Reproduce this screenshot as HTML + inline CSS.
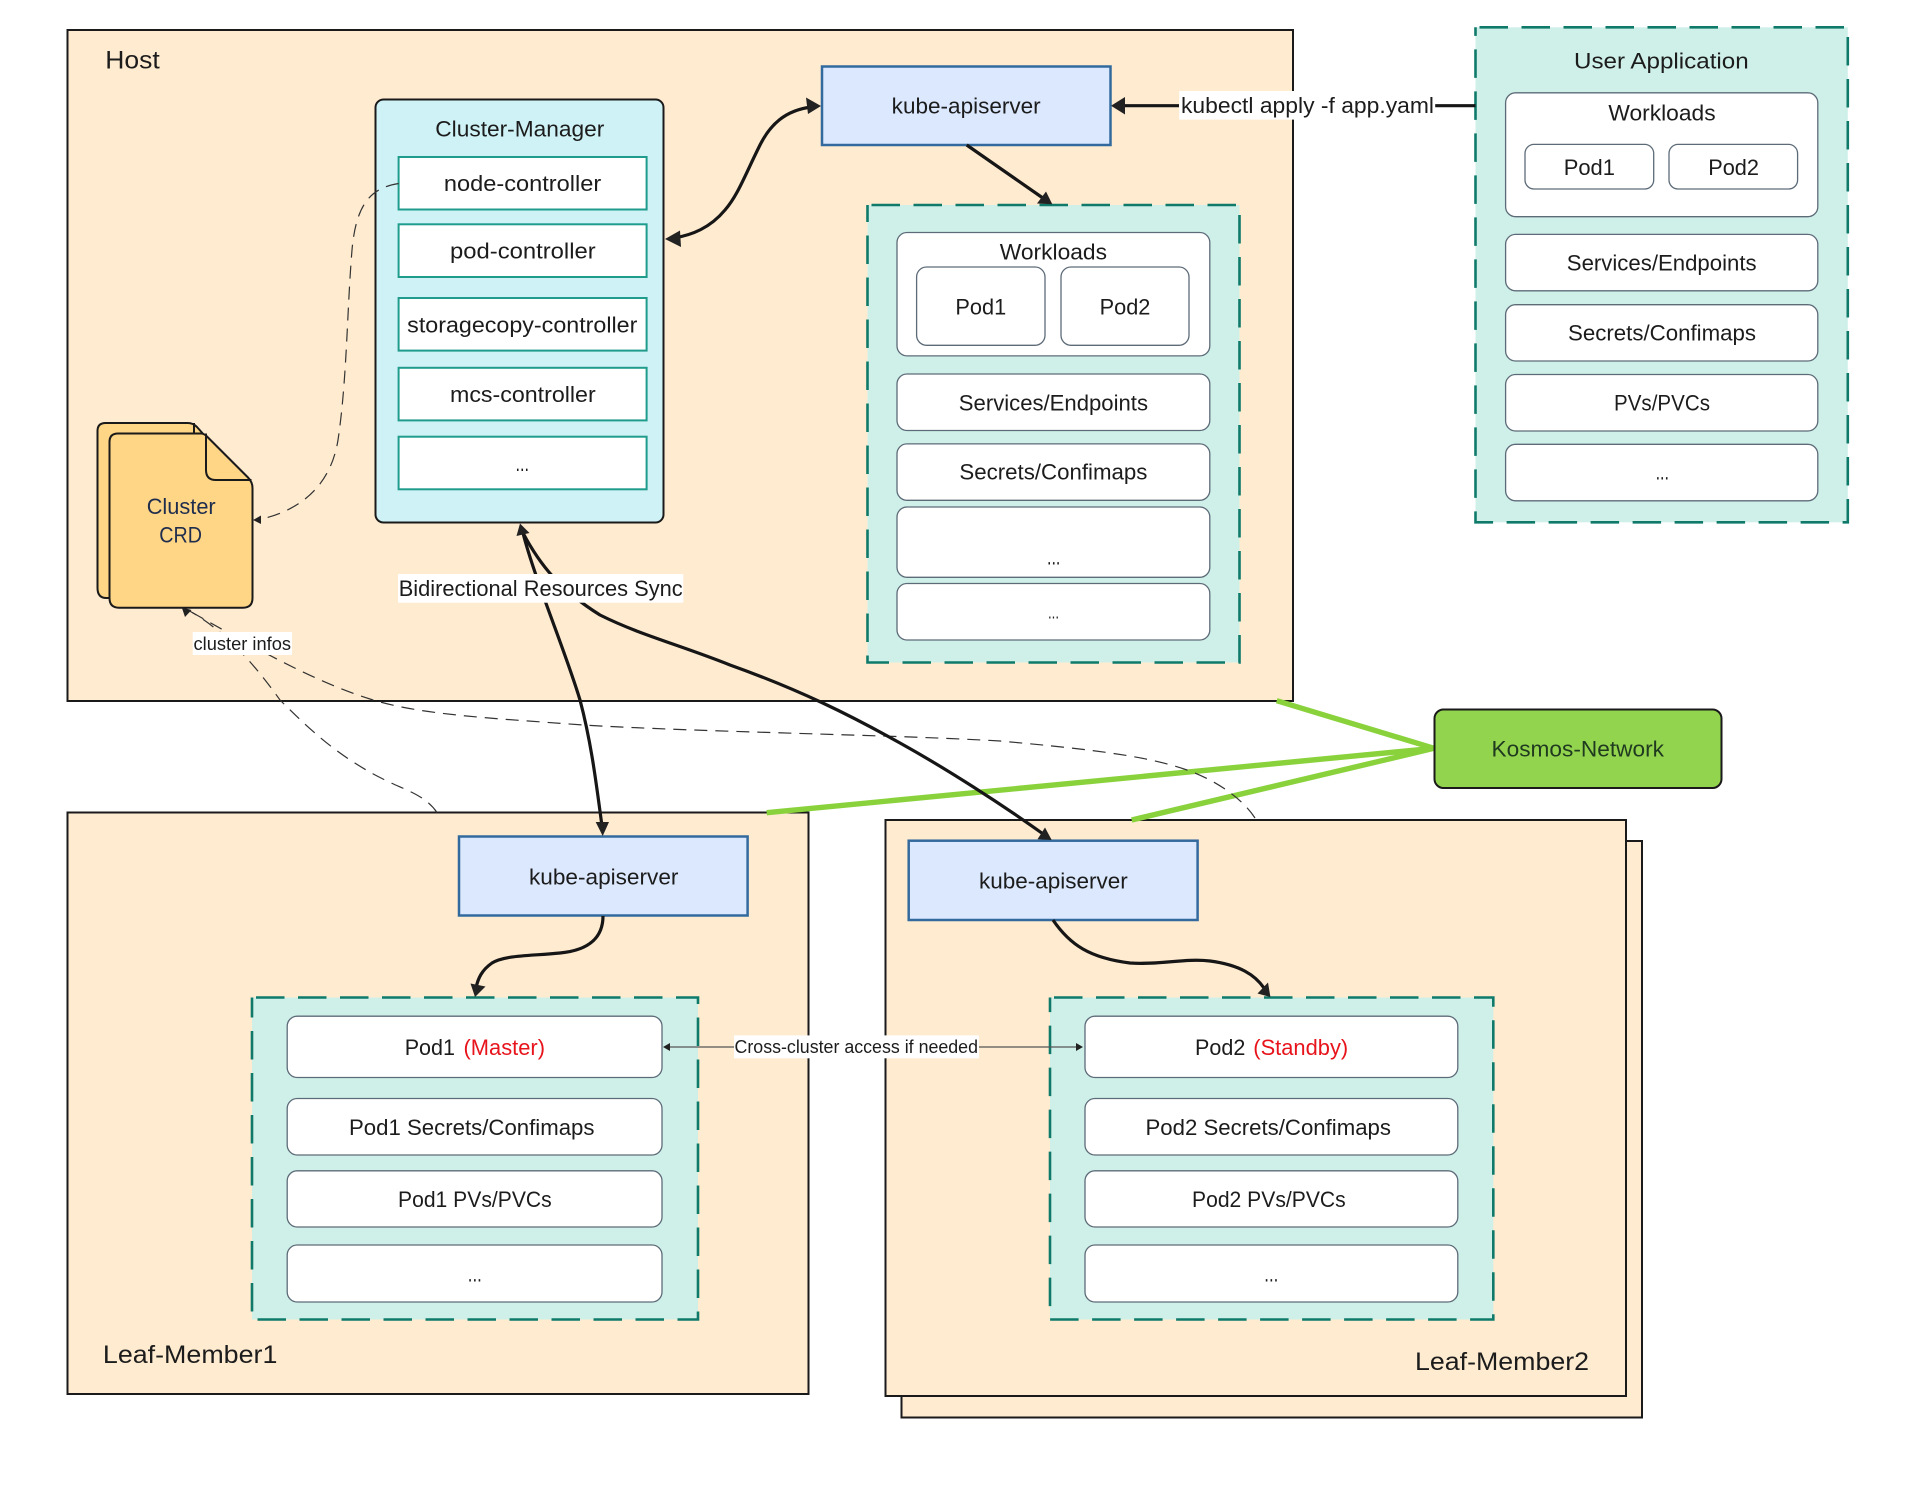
<!DOCTYPE html>
<html><head><meta charset="utf-8"><title>Kosmos architecture</title>
<style>
html,body{margin:0;padding:0;background:#fff}
svg{display:block}
text{font-family:"Liberation Sans",sans-serif;font-size:22px;fill:#1c1c1c}
.lg{font-size:25px}.sm{font-size:18px}
.frame{fill:#ffebd0;stroke:#1a1a1a;stroke-width:2}
.api{fill:#dbe8fe;stroke:#336a9e;stroke-width:2.5}
.grp{fill:#cff0e9;stroke:#0f7a6a;stroke-width:2.6;stroke-dasharray:28.5 13.5;stroke-dashoffset:-4}
.rb{fill:#fff;stroke:#5d6b78;stroke-width:1.3}
.ctl{fill:#fff;stroke:#1f9c8c;stroke-width:2}
.th{fill:none;stroke:#161616;stroke-width:3.2}
.da{fill:none;stroke:#333;stroke-width:1.2;stroke-dasharray:13 8}
.hd{fill:#222;stroke:none}
.gr{stroke:#8ad23c;stroke-width:5.4;fill:none}
</style></head><body>
<svg width="1920" height="1496" viewBox="0 0 1920 1496" xmlns="http://www.w3.org/2000/svg">
<rect width="1920" height="1496" fill="#fff"/>

<!-- frames -->
<rect class="frame" x="67.5" y="30" width="1225.5" height="671"/>
<rect class="frame" x="67.5" y="812.5" width="741" height="581.5"/>
<rect class="frame" x="901.5" y="841" width="740.5" height="576.5"/>
<rect class="frame" x="885.5" y="820" width="740.5" height="576"/>

<text class="lg" x="105.3" y="68.4" textLength="54.5" lengthAdjust="spacingAndGlyphs">Host</text>

<!-- Cluster manager -->
<rect x="375.5" y="99.5" width="288" height="423" rx="8" fill="#cff2f6" stroke="#1a1a1a" stroke-width="2"/>
<text x="435.3" y="136.3" textLength="169" lengthAdjust="spacingAndGlyphs">Cluster-Manager</text>
<rect class="ctl" x="398.6" y="157" width="248" height="52.5"/>
<text x="443.9" y="191" textLength="157.3" lengthAdjust="spacingAndGlyphs">node-controller</text>
<rect class="ctl" x="398.6" y="224.3" width="248" height="52.7"/>
<text x="450" y="258.5" textLength="145.7" lengthAdjust="spacingAndGlyphs">pod-controller</text>
<rect class="ctl" x="398.6" y="298" width="248" height="52.6"/>
<text x="407.2" y="332.4" textLength="230.2" lengthAdjust="spacingAndGlyphs">storagecopy-controller</text>
<rect class="ctl" x="398.6" y="367.8" width="248" height="52.6"/>
<text x="450" y="401.8" textLength="145.7" lengthAdjust="spacingAndGlyphs">mcs-controller</text>
<rect class="ctl" x="398.6" y="436.7" width="248" height="52.6"/>
<text x="515.5" y="471" textLength="13.5" lengthAdjust="spacingAndGlyphs">...</text>

<!-- CRD file icon -->
<path d="M105.5 423H188Q193 423 197 427L238 473V588Q238 598 228 598H106.5Q97.5 598 97.5 588V431Q97.5 423 105.5 423Z" fill="#ffd586" stroke="#1a1a1a" stroke-width="2"/>
<path d="M194 423V434" fill="none" stroke="#1a1a1a" stroke-width="2"/>
<path d="M118 433.5H201Q204 433.5 207 436.5L248 477.5Q252.5 482 252.5 488V598Q252.5 607.7 243 607.7H119Q109.5 607.7 109.5 598V442Q109.5 433.5 118 433.5Z" fill="#ffd586" stroke="#1a1a1a" stroke-width="2"/>
<path d="M206 433.5V470Q206 480 216 480H251.5" fill="none" stroke="#1a1a1a" stroke-width="2"/>
<text x="146.7" y="514" textLength="69" lengthAdjust="spacingAndGlyphs" style="fill:#1e2d4d">Cluster</text>
<text x="159.3" y="542.7" textLength="42.7" lengthAdjust="spacingAndGlyphs" style="fill:#1e2d4d">CRD</text>

<!-- Host kube-apiserver -->
<rect class="api" x="822" y="66.5" width="288.5" height="78.5"/>
<text x="891.7" y="113.3" textLength="149" lengthAdjust="spacingAndGlyphs">kube-apiserver</text>

<!-- Host workloads group -->
<rect class="grp" x="867.5" y="205" width="372" height="457.5"/>
<rect class="rb" x="897" y="232.5" width="312.8" height="123.4" rx="10"/>
<text x="999.8" y="259.7" textLength="107.2" lengthAdjust="spacingAndGlyphs">Workloads</text>
<rect class="rb" x="916.6" y="267" width="128.4" height="78.3" rx="10"/>
<text x="955.4" y="314.7" textLength="50.8" lengthAdjust="spacingAndGlyphs">Pod1</text>
<rect class="rb" x="1061" y="267" width="128" height="78.3" rx="10"/>
<text x="1099.6" y="314.7" textLength="50.8" lengthAdjust="spacingAndGlyphs">Pod2</text>
<rect class="rb" x="897" y="374" width="312.8" height="56.5" rx="10"/>
<text x="958.8" y="410.4" textLength="189.2" lengthAdjust="spacingAndGlyphs">Services/Endpoints</text>
<rect class="rb" x="897" y="443.9" width="312.8" height="56.4" rx="10"/>
<text x="959.4" y="479.7" textLength="188" lengthAdjust="spacingAndGlyphs">Secrets/Confimaps</text>
<rect class="rb" x="897" y="507" width="312.8" height="70.3" rx="10"/>
<text x="1047" y="564.4" textLength="13.4" lengthAdjust="spacingAndGlyphs">...</text>
<rect class="rb" x="897" y="583.5" width="312.8" height="56.5" rx="10"/>
<text class="sm" x="1048" y="618.5" textLength="11" lengthAdjust="spacingAndGlyphs">...</text>

<!-- User application -->
<rect class="grp" x="1475.5" y="27.3" width="372.3" height="495"/>
<text x="1574" y="68.4" textLength="174.7" lengthAdjust="spacingAndGlyphs">User Application</text>
<rect class="rb" x="1505.6" y="92.8" width="312.2" height="123.9" rx="10"/>
<text x="1608.4" y="120.5" textLength="107.2" lengthAdjust="spacingAndGlyphs">Workloads</text>
<rect class="rb" x="1525" y="144.4" width="128.7" height="44.6" rx="9"/>
<text x="1563.7" y="175" textLength="51.3" lengthAdjust="spacingAndGlyphs">Pod1</text>
<rect class="rb" x="1669" y="144.4" width="128.6" height="44.6" rx="9"/>
<text x="1708.2" y="175" textLength="50.8" lengthAdjust="spacingAndGlyphs">Pod2</text>
<rect class="rb" x="1505.6" y="234.4" width="312.2" height="56.4" rx="10"/>
<text x="1566.8" y="270.7" textLength="189.8" lengthAdjust="spacingAndGlyphs">Services/Endpoints</text>
<rect class="rb" x="1505.6" y="304.7" width="312.2" height="56.3" rx="10"/>
<text x="1568" y="340.5" textLength="188" lengthAdjust="spacingAndGlyphs">Secrets/Confimaps</text>
<rect class="rb" x="1505.6" y="374.5" width="312.2" height="56.5" rx="10"/>
<text x="1614" y="410.4" textLength="96" lengthAdjust="spacingAndGlyphs">PVs/PVCs</text>
<rect class="rb" x="1505.6" y="444.3" width="312.2" height="56.5" rx="10"/>
<text x="1655.6" y="479.7" textLength="13.4" lengthAdjust="spacingAndGlyphs">...</text>

<!-- Leaf 1 -->
<rect class="api" x="459" y="836.5" width="288.6" height="79"/>
<text x="529" y="884.7" textLength="149.4" lengthAdjust="spacingAndGlyphs">kube-apiserver</text>
<rect class="grp" x="252" y="997.5" width="446" height="322"/>
<rect class="rb" x="287.2" y="1016.2" width="374.8" height="61.3" rx="10"/>
<text x="404.7" y="1055" textLength="50.3" lengthAdjust="spacingAndGlyphs">Pod1</text>
<text x="463.5" y="1055" textLength="81.5" lengthAdjust="spacingAndGlyphs" style="fill:#e8141c">(Master)</text>
<rect class="rb" x="287.2" y="1098.5" width="374.8" height="56.5" rx="10"/>
<text x="349" y="1134.9" textLength="245.5" lengthAdjust="spacingAndGlyphs">Pod1 Secrets/Confimaps</text>
<rect class="rb" x="287.2" y="1170.8" width="374.8" height="56.2" rx="10"/>
<text x="398" y="1207" textLength="153.7" lengthAdjust="spacingAndGlyphs">Pod1 PVs/PVCs</text>
<rect class="rb" x="287.2" y="1245" width="374.8" height="57" rx="10"/>
<text x="467.8" y="1281.7" textLength="14" lengthAdjust="spacingAndGlyphs">...</text>
<text class="lg" x="102.9" y="1363" textLength="174.5" lengthAdjust="spacingAndGlyphs">Leaf-Member1</text>

<!-- Leaf 2 -->
<rect class="api" x="908.7" y="840.7" width="288.9" height="79.3"/>
<text x="979" y="888.5" textLength="148.8" lengthAdjust="spacingAndGlyphs">kube-apiserver</text>
<rect class="grp" x="1050" y="997.5" width="443.3" height="322"/>
<rect class="rb" x="1085" y="1016.2" width="372.8" height="61.3" rx="10"/>
<text x="1195" y="1055" textLength="50.3" lengthAdjust="spacingAndGlyphs">Pod2</text>
<text x="1253.3" y="1055" textLength="94.9" lengthAdjust="spacingAndGlyphs" style="fill:#e8141c">(Standby)</text>
<rect class="rb" x="1085" y="1098.5" width="372.8" height="56.5" rx="10"/>
<text x="1145.5" y="1134.9" textLength="245.5" lengthAdjust="spacingAndGlyphs">Pod2 Secrets/Confimaps</text>
<rect class="rb" x="1085" y="1170.8" width="372.8" height="56.2" rx="10"/>
<text x="1192" y="1207" textLength="153.7" lengthAdjust="spacingAndGlyphs">Pod2 PVs/PVCs</text>
<rect class="rb" x="1085" y="1245" width="372.8" height="57" rx="10"/>
<text x="1264.3" y="1281.7" textLength="14" lengthAdjust="spacingAndGlyphs">...</text>
<text class="lg" x="1415" y="1370" textLength="174" lengthAdjust="spacingAndGlyphs">Leaf-Member2</text>

<!-- green links -->
<path class="gr" d="M1276.7 700.7L1434 748.3M766.7 812.7L1434 748.3M1131.7 820L1434 748.3"/>

<!-- Kosmos network -->
<rect x="1434.5" y="709.5" width="287" height="78.5" rx="9" fill="#93d44f" stroke="#1a1a1a" stroke-width="2"/>
<text x="1491.5" y="756.5" textLength="172.5" lengthAdjust="spacingAndGlyphs" style="fill:#1f3a1f">Kosmos-Network</text>

<!-- dashed curves -->
<path class="da" d="M398.6 183.5C370 188 356 205 352 250C347 310 347 380 338 440C330 490 295 512 259 519.5"/>
<path class="hd" d="M253 520L261 515.5V524Z"/>
<path class="da" d="M437 812.5C425 795 405 790 385 780C340 758 310 730 280 700C255 665 225 630 186 609"/>
<path class="da" d="M1255 818C1240 795 1210 778 1187 770C1150 757 1100 750 1000 741C900 735 700 732 583 725C490 718 420 715 370 699C310 680 250 645 186 609"/>
<path class="hd" d="M181.7 607.3L191.5 610L185 617Z"/>

<!-- thick arrows -->
<path class="th" d="M812 107C785 110 770 125 760 145C745 175 738 195 725 210C710 228 692 235 674 238"/>
<path class="hd" d="M821 106L806 97.5L808 114Z"/>
<path class="hd" d="M665 239L680 230.5L681 247Z"/>

<path class="th" d="M1179 105.7H1120"/>
<path class="hd" d="M1111 105.7L1125 97V114.5Z"/>
<path class="th" d="M1434 105.7H1475.5"/>

<path class="th" d="M966.7 145L1045 199.5"/>
<path class="hd" d="M1052.3 204.3L1037 203.5L1046 191.5Z"/>

<path class="th" d="M523 533C535 580 565 650 580 700C592 745 597 790 602 826"/>
<path class="hd" d="M602.7 836L595.7 822H609Z"/>
<path class="th" d="M523 533C540 565 560 590 600 615C640 635 680 645 730 665C800 690 850 715 900 743C945 768 1000 803 1046 836"/>
<path class="hd" d="M1051.7 840L1037.5 839.3L1045 827.5Z"/>
<path class="hd" d="M520 523.5L529.5 533L516.5 536Z"/>

<path class="th" d="M603 916C603 935 592 950 560 953C530 956 505 955 492 963C482 970 478 978 476 988"/>
<path class="hd" d="M475 997L470.5 983.5L485.5 986.5Z"/>
<path class="th" d="M1053 920C1070 945 1090 958 1130 963C1160 965 1185 958 1210 961C1240 965 1255 975 1264 988"/>
<path class="hd" d="M1270.4 997L1257.5 993.5L1268 982.5Z"/>

<!-- cross cluster -->
<path d="M668 1047H1078" stroke="#555" stroke-width="1.2" fill="none"/>
<path class="hd" d="M663 1047L670 1043V1051Z"/>
<path class="hd" d="M1083 1047L1076 1043V1051Z"/>

<!-- labels with white bg -->
<rect x="398" y="574" width="285.3" height="28.7" fill="#fff"/>
<text x="398.7" y="596" textLength="284" lengthAdjust="spacingAndGlyphs">Bidirectional Resources Sync</text>
<rect x="192.7" y="632" width="99.3" height="23" fill="#fff"/>
<text class="sm" x="193.5" y="650" textLength="97.5" lengthAdjust="spacingAndGlyphs">cluster infos</text>
<rect x="1179.2" y="91" width="256" height="28.6" fill="#fff"/>
<text x="1181" y="113" textLength="253" lengthAdjust="spacingAndGlyphs">kubectl apply -f app.yaml</text>
<rect x="734" y="1035.4" width="245" height="22.9" fill="#fff"/>
<text class="sm" x="734.5" y="1053" textLength="243.5" lengthAdjust="spacingAndGlyphs">Cross-cluster access if needed</text>
</svg>
</body></html>
